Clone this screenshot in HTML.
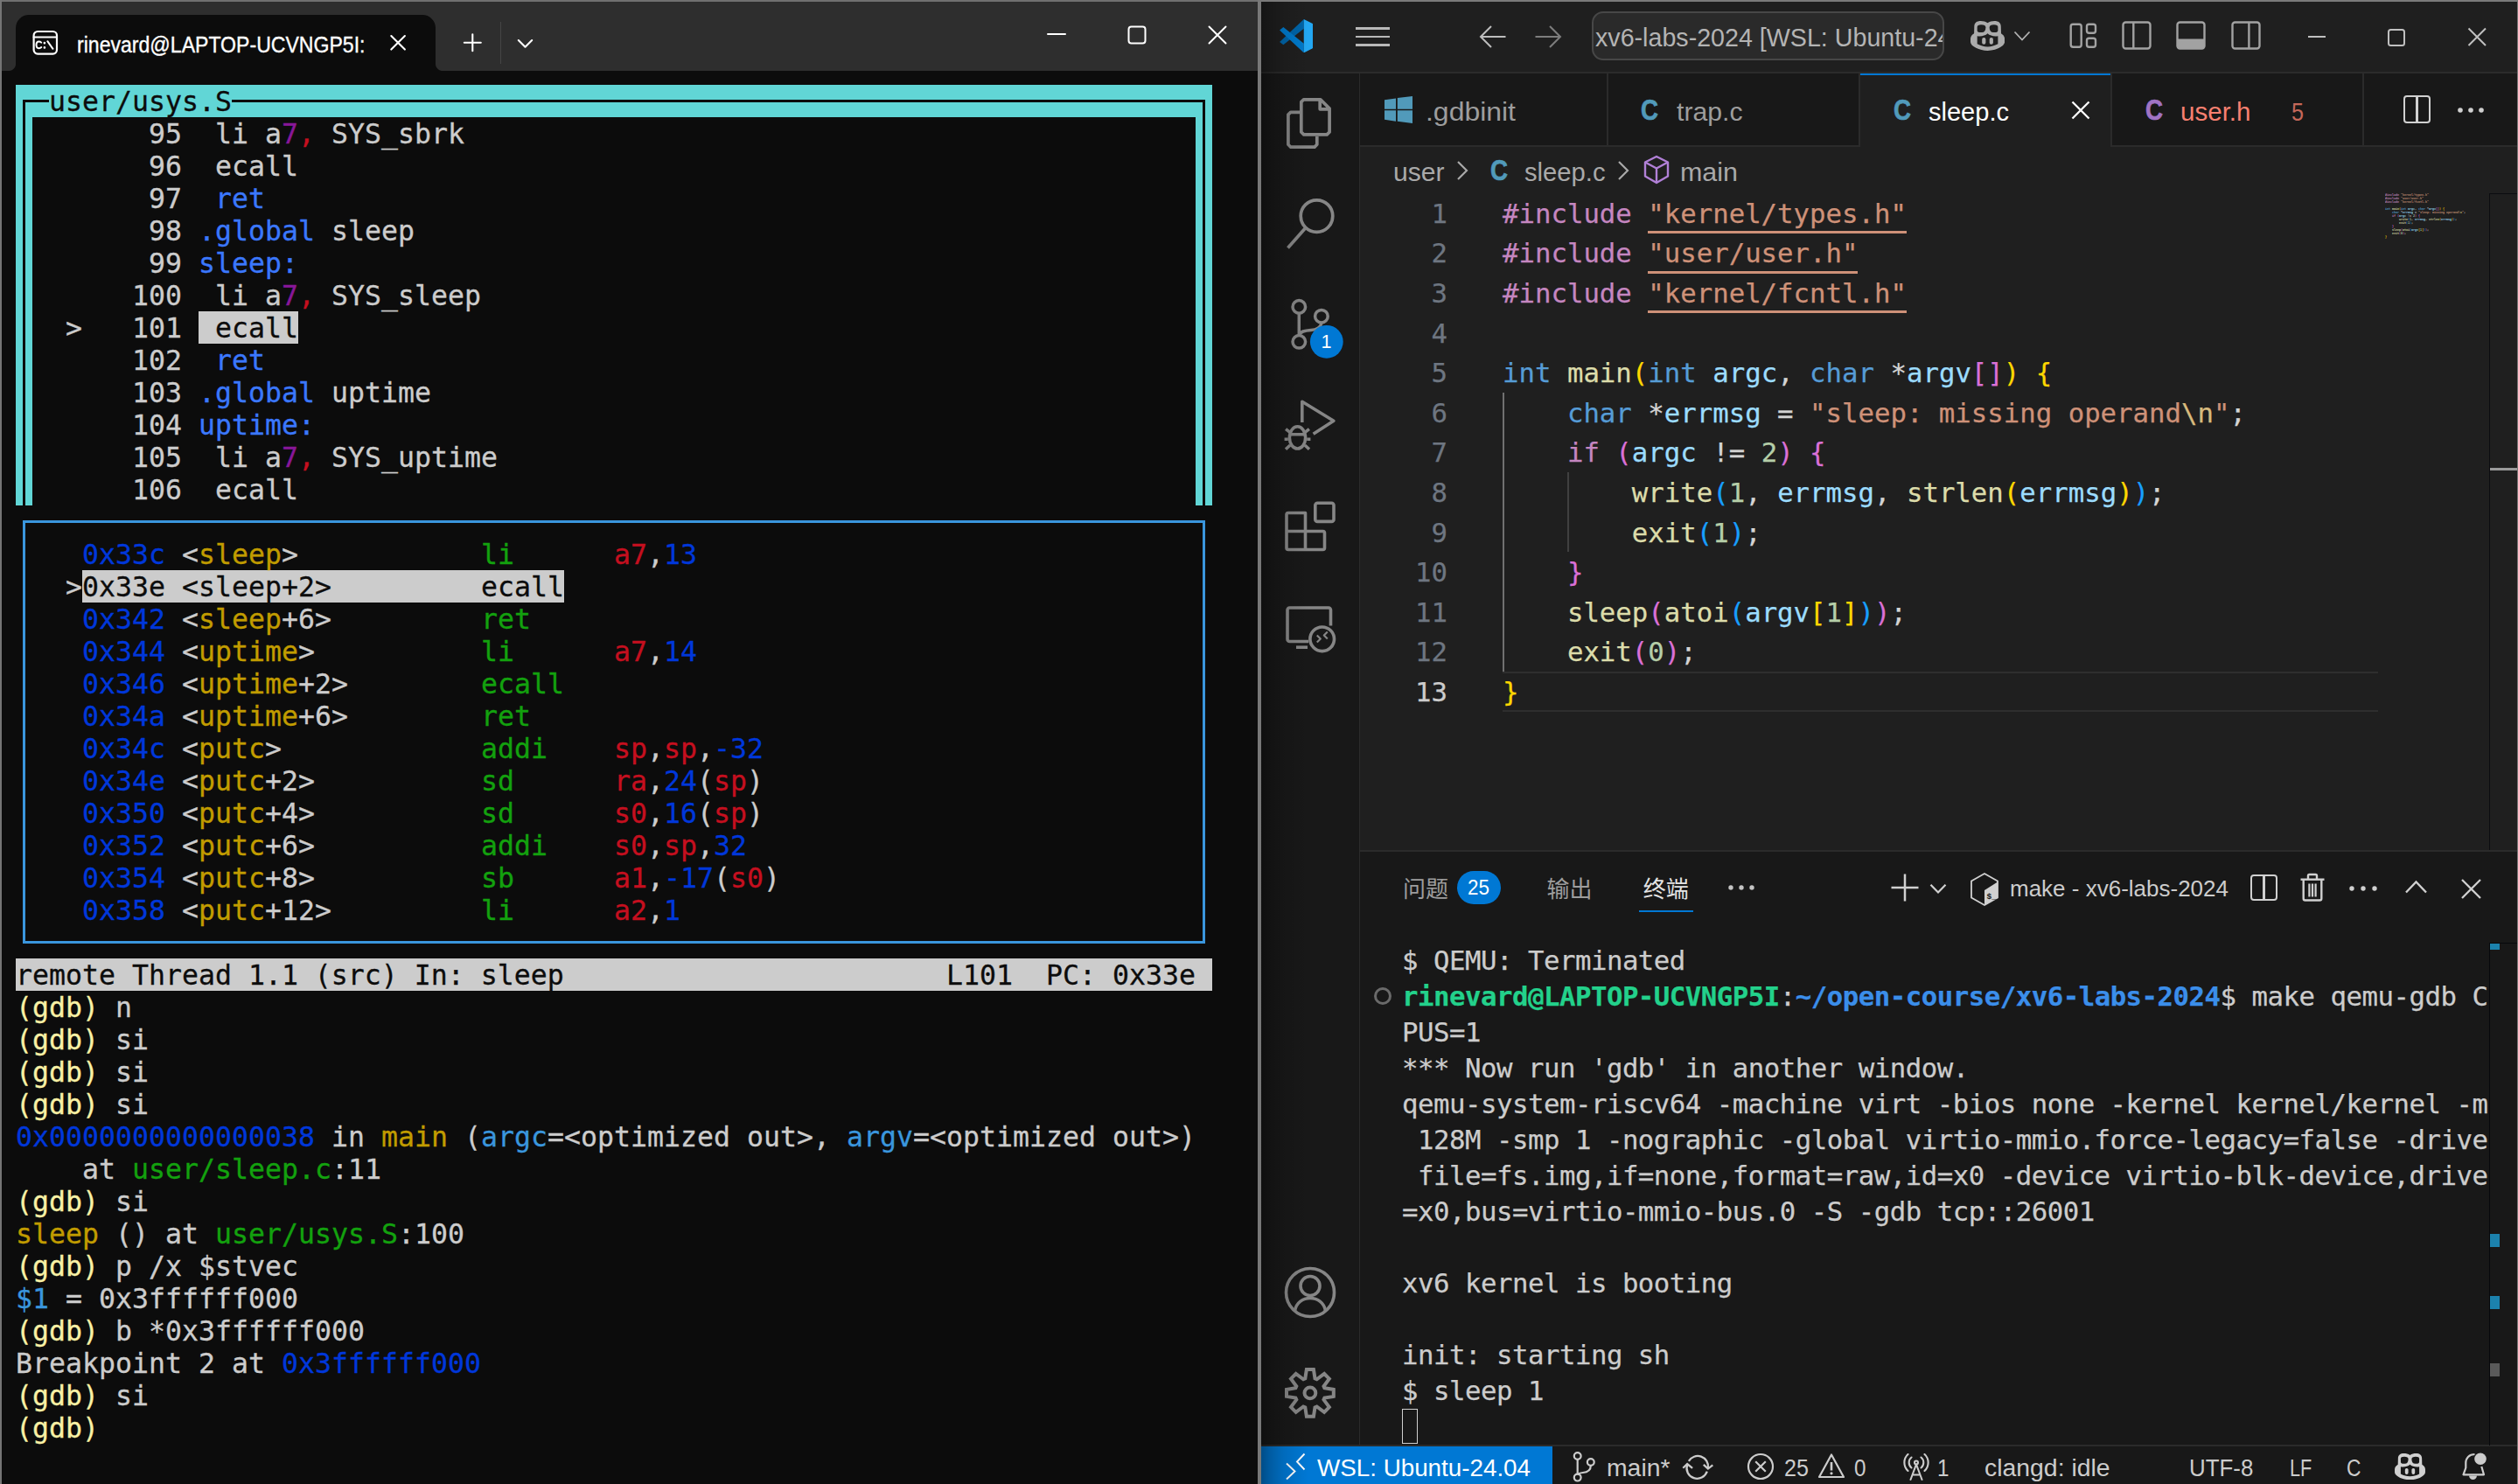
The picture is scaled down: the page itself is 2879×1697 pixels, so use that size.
<!DOCTYPE html><html><head><meta charset="utf-8"><title>xv6 gdb</title><style>
*{margin:0;padding:0;box-sizing:border-box}
html,body{width:2879px;height:1697px;overflow:hidden;background:#0c0c0c}
body{position:relative;font-family:"Liberation Sans",sans-serif}
.bx{position:absolute}
#wt{position:absolute;left:0;top:0;width:1441px;height:1697px;background:#0c0c0c;overflow:hidden}
#wt .t{position:absolute;white-space:pre;font-family:"DejaVu Sans Mono","Liberation Mono",monospace;font-size:31.56px;line-height:37px;height:37px;margin-top:1px;-webkit-text-stroke:0.3px currentColor}

.u{position:absolute;white-space:pre;font-family:"Liberation Sans","Noto Sans CJK SC",sans-serif;transform-origin:0 50%}
.m{position:absolute;white-space:pre;font-family:"DejaVu Sans Mono","Liberation Mono",monospace}
.ed{font-size:30.7px;line-height:46px;height:46px;margin-top:1px;-webkit-text-stroke:0.25px currentColor}
.tm{font-size:30.7px;letter-spacing:-0.484px;line-height:41px;height:41px;margin-top:0.5px;-webkit-text-stroke:0.25px currentColor}
.m i{font-style:normal}
</style></head><body>
<div id="wt">
<div class="bx" style="left:0;top:0;width:1441px;height:81px;background:#2e2e2e"></div>
<div class="bx" style="left:18px;top:17px;width:480px;height:64px;background:#0c0c0c;border-radius:15px 15px 0 0"></div>
<div class="bx" style="left:10px;top:73px;width:8px;height:8px;background:radial-gradient(circle at 0 0,#2e2e2e 7.500px,#0c0c0c 8.500px)"></div>
<div class="bx" style="left:498px;top:73px;width:8px;height:8px;background:radial-gradient(circle at 100% 0,#2e2e2e 7.500px,#0c0c0c 8.500px)"></div>
<svg class="bx" style="left:36px;top:33px" width="32" height="32" viewBox="0 0 32 32" fill="none" stroke="#fff" stroke-width="2.2" stroke-linecap="round" stroke-linejoin="round">
<rect x="2.6" y="3" width="26.4" height="25.6" rx="4.5"/><path d="M2.6 9.6H29" stroke-width="2"/>
<path d="M11.2 15.6c-.9-.9-1.7-1.2-2.7-1.2-2 0-3 1.6-3 3.9s1 3.9 3 3.9c1 0 1.8-.3 2.7-1.2" stroke-width="2"/>
<path d="M14.9 16.1v.1M14.9 21.3v.1" stroke-width="2.6"/><path d="M18.3 14.2l6.2 8.6" stroke-width="2"/>
</svg>
<div class="bx" id="wt-title" style="left:88px;top:32px;width:329px;height:38px;overflow:hidden"><span style="display:inline-block;line-height:38px;font-size:25.5px;color:#fff;white-space:nowrap;-webkit-text-stroke:0.35px #fff;transform:scaleX(0.905);transform-origin:0 50%">rinevard@LAPTOP-UCVNGP5I: ~/open-course/xv6-labs-2024</span></div>
<svg class="bx" style="left:443px;top:37px" width="24" height="24" viewBox="0 0 24 24" stroke="#fff" stroke-width="2.1" stroke-linecap="round"><path d="M4.300 4l15.600 15.600M19.900 4L4.300 19.600"/></svg>
<svg class="bx" style="left:528px;top:37px" width="24" height="24" viewBox="0 0 24 24" stroke="#fff" stroke-width="2.1" stroke-linecap="round"><path d="M12.300 2.200v19M2.800 11.700h19"/></svg>
<div class="bx" style="left:572px;top:25px;width:1px;height:48px;background:#454545"></div>
<svg class="bx" style="left:588px;top:37px" width="24" height="24" viewBox="0 0 24 24" fill="none" stroke="#fff" stroke-width="2.1" stroke-linecap="round" stroke-linejoin="round"><path d="M4.800 9l7.700 7.700L20.200 9"/></svg>
<svg class="bx" style="left:1196px;top:27px" width="24" height="24" viewBox="0 0 24 24" stroke="#fff" stroke-width="2" stroke-linecap="round"><path d="M2 12h20"/></svg>
<svg class="bx" style="left:1288px;top:28px" width="24" height="24" viewBox="0 0 24 24" fill="none" stroke="#fff" stroke-width="2"><rect x="2.500" y="2.500" width="19" height="19" rx="3"/></svg>
<svg class="bx" style="left:1380px;top:28px" width="24" height="24" viewBox="0 0 24 24" stroke="#fff" stroke-width="2" stroke-linecap="round"><path d="M2.500 2.500l19 19M21.500 2.500l-19 19"/></svg>
<div class="bx" style="left:0;top:0;width:1441px;height:2px;background:#707070"></div>
<div class="bx" style="left:0;top:0;width:2px;height:1697px;background:#757575"></div>
<div class="bx" style="left:1438px;top:0;width:3px;height:1697px;background:#787878"></div>

<div class="bx" style="left:18px;top:97px;width:1368px;height:37px;background:#61d6d6"></div>
<div class="bx" style="left:18px;top:134px;width:19px;height:444px;background:#61d6d6"></div>
<div class="bx" style="left:1367px;top:134px;width:19px;height:444px;background:#61d6d6"></div>
<div class="bx" style="left:26px;top:114px;width:30px;height:3px;background:#0c0c0c"></div>
<div class="bx" style="left:265px;top:114px;width:1113px;height:3px;background:#0c0c0c"></div>
<div class="bx" style="left:26px;top:114px;width:3px;height:464px;background:#0c0c0c"></div>
<div class="bx" style="left:1375px;top:114px;width:3px;height:464px;background:#0c0c0c"></div>
<div class="bx" style="left:26px;top:595px;width:1352px;height:484px;border:3px solid #3a96dd;box-sizing:border-box"></div>
<div class="bx" style="left:227px;top:356px;width:114px;height:37px;background:#cccccc"></div>
<div class="bx" style="left:94px;top:652px;width:551px;height:37px;background:#cccccc"></div>
<div class="bx" style="left:18px;top:1096px;width:1368px;height:37px;background:#cccccc"></div>
<span class="t" style="left:56px;top:97px;color:#0c0c0c">user/usys.S</span>
<span class="t" style="left:170px;top:134px;color:#cccccc">95</span>
<span class="t" style="left:227px;top:134px;color:#cccccc"> li a</span>
<span class="t" style="left:322px;top:134px;color:#881798">7</span>
<span class="t" style="left:341px;top:134px;color:#c50f1f">,</span>
<span class="t" style="left:360px;top:134px;color:#cccccc"> SYS_sbrk</span>
<span class="t" style="left:170px;top:171px;color:#cccccc">96</span>
<span class="t" style="left:227px;top:171px;color:#cccccc"> ecall</span>
<span class="t" style="left:170px;top:208px;color:#cccccc">97</span>
<span class="t" style="left:227px;top:208px;color:#cccccc"> </span>
<span class="t" style="left:246px;top:208px;color:#3b78ff">ret</span>
<span class="t" style="left:170px;top:245px;color:#cccccc">98</span>
<span class="t" style="left:227px;top:245px;color:#3b78ff">.global</span>
<span class="t" style="left:360px;top:245px;color:#cccccc"> sleep</span>
<span class="t" style="left:170px;top:282px;color:#cccccc">99</span>
<span class="t" style="left:227px;top:282px;color:#3b78ff">sleep:</span>
<span class="t" style="left:151px;top:319px;color:#cccccc">100</span>
<span class="t" style="left:227px;top:319px;color:#cccccc"> li a</span>
<span class="t" style="left:322px;top:319px;color:#881798">7</span>
<span class="t" style="left:341px;top:319px;color:#c50f1f">,</span>
<span class="t" style="left:360px;top:319px;color:#cccccc"> SYS_sleep</span>
<span class="t" style="left:151px;top:356px;color:#cccccc">101</span>
<span class="t" style="left:227px;top:356px;color:#0c0c0c"> ecall</span>
<span class="t" style="left:75px;top:356px;color:#cccccc">&gt;</span>
<span class="t" style="left:151px;top:393px;color:#cccccc">102</span>
<span class="t" style="left:227px;top:393px;color:#cccccc"> </span>
<span class="t" style="left:246px;top:393px;color:#3b78ff">ret</span>
<span class="t" style="left:151px;top:430px;color:#cccccc">103</span>
<span class="t" style="left:227px;top:430px;color:#3b78ff">.global</span>
<span class="t" style="left:360px;top:430px;color:#cccccc"> uptime</span>
<span class="t" style="left:151px;top:467px;color:#cccccc">104</span>
<span class="t" style="left:227px;top:467px;color:#3b78ff">uptime:</span>
<span class="t" style="left:151px;top:504px;color:#cccccc">105</span>
<span class="t" style="left:227px;top:504px;color:#cccccc"> li a</span>
<span class="t" style="left:322px;top:504px;color:#881798">7</span>
<span class="t" style="left:341px;top:504px;color:#c50f1f">,</span>
<span class="t" style="left:360px;top:504px;color:#cccccc"> SYS_uptime</span>
<span class="t" style="left:151px;top:541px;color:#cccccc">106</span>
<span class="t" style="left:227px;top:541px;color:#cccccc"> ecall</span>
<span class="t" style="left:94px;top:615px;color:#0037da">0x33c</span>
<span class="t" style="left:189px;top:615px;color:#cccccc"> &lt;</span>
<span class="t" style="left:227px;top:615px;color:#c19c00">sleep</span>
<span class="t" style="left:322px;top:615px;color:#cccccc">&gt;</span>
<span class="t" style="left:550px;top:615px;color:#13a10e">li</span>
<span class="t" style="left:702px;top:615px;color:#c50f1f">a7</span>
<span class="t" style="left:740px;top:615px;color:#cccccc">,</span>
<span class="t" style="left:759px;top:615px;color:#0037da">13</span>
<span class="t" style="left:75px;top:652px;color:#cccccc">&gt;</span>
<span class="t" style="left:94px;top:652px;color:#0c0c0c">0x33e &lt;sleep+2&gt;</span>
<span class="t" style="left:550px;top:652px;color:#0c0c0c">ecall</span>
<span class="t" style="left:94px;top:689px;color:#0037da">0x342</span>
<span class="t" style="left:189px;top:689px;color:#cccccc"> &lt;</span>
<span class="t" style="left:227px;top:689px;color:#c19c00">sleep</span>
<span class="t" style="left:322px;top:689px;color:#cccccc">+6&gt;</span>
<span class="t" style="left:550px;top:689px;color:#13a10e">ret</span>
<span class="t" style="left:94px;top:726px;color:#0037da">0x344</span>
<span class="t" style="left:189px;top:726px;color:#cccccc"> &lt;</span>
<span class="t" style="left:227px;top:726px;color:#c19c00">uptime</span>
<span class="t" style="left:341px;top:726px;color:#cccccc">&gt;</span>
<span class="t" style="left:550px;top:726px;color:#13a10e">li</span>
<span class="t" style="left:702px;top:726px;color:#c50f1f">a7</span>
<span class="t" style="left:740px;top:726px;color:#cccccc">,</span>
<span class="t" style="left:759px;top:726px;color:#0037da">14</span>
<span class="t" style="left:94px;top:763px;color:#0037da">0x346</span>
<span class="t" style="left:189px;top:763px;color:#cccccc"> &lt;</span>
<span class="t" style="left:227px;top:763px;color:#c19c00">uptime</span>
<span class="t" style="left:341px;top:763px;color:#cccccc">+2&gt;</span>
<span class="t" style="left:550px;top:763px;color:#13a10e">ecall</span>
<span class="t" style="left:94px;top:800px;color:#0037da">0x34a</span>
<span class="t" style="left:189px;top:800px;color:#cccccc"> &lt;</span>
<span class="t" style="left:227px;top:800px;color:#c19c00">uptime</span>
<span class="t" style="left:341px;top:800px;color:#cccccc">+6&gt;</span>
<span class="t" style="left:550px;top:800px;color:#13a10e">ret</span>
<span class="t" style="left:94px;top:837px;color:#0037da">0x34c</span>
<span class="t" style="left:189px;top:837px;color:#cccccc"> &lt;</span>
<span class="t" style="left:227px;top:837px;color:#c19c00">putc</span>
<span class="t" style="left:303px;top:837px;color:#cccccc">&gt;</span>
<span class="t" style="left:550px;top:837px;color:#13a10e">addi</span>
<span class="t" style="left:702px;top:837px;color:#c50f1f">sp</span>
<span class="t" style="left:740px;top:837px;color:#cccccc">,</span>
<span class="t" style="left:759px;top:837px;color:#c50f1f">sp</span>
<span class="t" style="left:797px;top:837px;color:#cccccc">,</span>
<span class="t" style="left:816px;top:837px;color:#0037da">-32</span>
<span class="t" style="left:94px;top:874px;color:#0037da">0x34e</span>
<span class="t" style="left:189px;top:874px;color:#cccccc"> &lt;</span>
<span class="t" style="left:227px;top:874px;color:#c19c00">putc</span>
<span class="t" style="left:303px;top:874px;color:#cccccc">+2&gt;</span>
<span class="t" style="left:550px;top:874px;color:#13a10e">sd</span>
<span class="t" style="left:702px;top:874px;color:#c50f1f">ra</span>
<span class="t" style="left:740px;top:874px;color:#cccccc">,</span>
<span class="t" style="left:759px;top:874px;color:#0037da">24</span>
<span class="t" style="left:797px;top:874px;color:#cccccc">(</span>
<span class="t" style="left:816px;top:874px;color:#c50f1f">sp</span>
<span class="t" style="left:854px;top:874px;color:#cccccc">)</span>
<span class="t" style="left:94px;top:911px;color:#0037da">0x350</span>
<span class="t" style="left:189px;top:911px;color:#cccccc"> &lt;</span>
<span class="t" style="left:227px;top:911px;color:#c19c00">putc</span>
<span class="t" style="left:303px;top:911px;color:#cccccc">+4&gt;</span>
<span class="t" style="left:550px;top:911px;color:#13a10e">sd</span>
<span class="t" style="left:702px;top:911px;color:#c50f1f">s0</span>
<span class="t" style="left:740px;top:911px;color:#cccccc">,</span>
<span class="t" style="left:759px;top:911px;color:#0037da">16</span>
<span class="t" style="left:797px;top:911px;color:#cccccc">(</span>
<span class="t" style="left:816px;top:911px;color:#c50f1f">sp</span>
<span class="t" style="left:854px;top:911px;color:#cccccc">)</span>
<span class="t" style="left:94px;top:948px;color:#0037da">0x352</span>
<span class="t" style="left:189px;top:948px;color:#cccccc"> &lt;</span>
<span class="t" style="left:227px;top:948px;color:#c19c00">putc</span>
<span class="t" style="left:303px;top:948px;color:#cccccc">+6&gt;</span>
<span class="t" style="left:550px;top:948px;color:#13a10e">addi</span>
<span class="t" style="left:702px;top:948px;color:#c50f1f">s0</span>
<span class="t" style="left:740px;top:948px;color:#cccccc">,</span>
<span class="t" style="left:759px;top:948px;color:#c50f1f">sp</span>
<span class="t" style="left:797px;top:948px;color:#cccccc">,</span>
<span class="t" style="left:816px;top:948px;color:#0037da">32</span>
<span class="t" style="left:94px;top:985px;color:#0037da">0x354</span>
<span class="t" style="left:189px;top:985px;color:#cccccc"> &lt;</span>
<span class="t" style="left:227px;top:985px;color:#c19c00">putc</span>
<span class="t" style="left:303px;top:985px;color:#cccccc">+8&gt;</span>
<span class="t" style="left:550px;top:985px;color:#13a10e">sb</span>
<span class="t" style="left:702px;top:985px;color:#c50f1f">a1</span>
<span class="t" style="left:740px;top:985px;color:#cccccc">,</span>
<span class="t" style="left:759px;top:985px;color:#0037da">-17</span>
<span class="t" style="left:816px;top:985px;color:#cccccc">(</span>
<span class="t" style="left:835px;top:985px;color:#c50f1f">s0</span>
<span class="t" style="left:873px;top:985px;color:#cccccc">)</span>
<span class="t" style="left:94px;top:1022px;color:#0037da">0x358</span>
<span class="t" style="left:189px;top:1022px;color:#cccccc"> &lt;</span>
<span class="t" style="left:227px;top:1022px;color:#c19c00">putc</span>
<span class="t" style="left:303px;top:1022px;color:#cccccc">+12&gt;</span>
<span class="t" style="left:550px;top:1022px;color:#13a10e">li</span>
<span class="t" style="left:702px;top:1022px;color:#c50f1f">a2</span>
<span class="t" style="left:740px;top:1022px;color:#cccccc">,</span>
<span class="t" style="left:759px;top:1022px;color:#0037da">1</span>
<span class="t" style="left:18px;top:1096px;color:#0c0c0c">remote Thread 1.1 (src) In: sleep</span>
<span class="t" style="left:1082px;top:1096px;color:#0c0c0c">L101  PC: 0x33e</span>
<span class="t" style="left:18px;top:1133px;color:#f9f1a5">(gdb)</span>
<span class="t" style="left:113px;top:1133px;color:#cccccc"> n</span>
<span class="t" style="left:18px;top:1170px;color:#f9f1a5">(gdb)</span>
<span class="t" style="left:113px;top:1170px;color:#cccccc"> si</span>
<span class="t" style="left:18px;top:1207px;color:#f9f1a5">(gdb)</span>
<span class="t" style="left:113px;top:1207px;color:#cccccc"> si</span>
<span class="t" style="left:18px;top:1244px;color:#f9f1a5">(gdb)</span>
<span class="t" style="left:113px;top:1244px;color:#cccccc"> si</span>
<span class="t" style="left:18px;top:1281px;color:#0037da">0x0000000000000038</span>
<span class="t" style="left:360px;top:1281px;color:#cccccc"> in </span>
<span class="t" style="left:436px;top:1281px;color:#c19c00">main</span>
<span class="t" style="left:512px;top:1281px;color:#cccccc"> (</span>
<span class="t" style="left:550px;top:1281px;color:#3a96dd">argc</span>
<span class="t" style="left:626px;top:1281px;color:#cccccc">=&lt;optimized out&gt;, </span>
<span class="t" style="left:968px;top:1281px;color:#3a96dd">argv</span>
<span class="t" style="left:1044px;top:1281px;color:#cccccc">=&lt;optimized out&gt;)</span>
<span class="t" style="left:18px;top:1318px;color:#cccccc">    at </span>
<span class="t" style="left:151px;top:1318px;color:#13a10e">user/sleep.c</span>
<span class="t" style="left:379px;top:1318px;color:#cccccc">:11</span>
<span class="t" style="left:18px;top:1355px;color:#f9f1a5">(gdb)</span>
<span class="t" style="left:113px;top:1355px;color:#cccccc"> si</span>
<span class="t" style="left:18px;top:1392px;color:#c19c00">sleep</span>
<span class="t" style="left:113px;top:1392px;color:#cccccc"> () at </span>
<span class="t" style="left:246px;top:1392px;color:#13a10e">user/usys.S</span>
<span class="t" style="left:455px;top:1392px;color:#cccccc">:100</span>
<span class="t" style="left:18px;top:1429px;color:#f9f1a5">(gdb)</span>
<span class="t" style="left:113px;top:1429px;color:#cccccc"> p /x $stvec</span>
<span class="t" style="left:18px;top:1466px;color:#3a96dd">$1</span>
<span class="t" style="left:56px;top:1466px;color:#cccccc"> = 0x3ffffff000</span>
<span class="t" style="left:18px;top:1503px;color:#f9f1a5">(gdb)</span>
<span class="t" style="left:113px;top:1503px;color:#cccccc"> b *0x3ffffff000</span>
<span class="t" style="left:18px;top:1540px;color:#cccccc">Breakpoint 2 at </span>
<span class="t" style="left:322px;top:1540px;color:#0037da">0x3ffffff000</span>
<span class="t" style="left:18px;top:1577px;color:#f9f1a5">(gdb)</span>
<span class="t" style="left:113px;top:1577px;color:#cccccc"> si</span>
<span class="t" style="left:18px;top:1614px;color:#f9f1a5">(gdb)</span>
<span class="t" style="left:113px;top:1614px;color:#cccccc"> </span>
</div>
<div class="bx" style="left:1442px;top:0px;width:1437px;height:1697px;background:#1f1f1f;"></div>
<div class="bx" style="left:1442px;top:84px;width:112px;height:1569px;background:#181818;"></div>
<div class="bx" style="left:1554px;top:84px;width:1px;height:1569px;background:#2b2b2b;"></div>
<div class="bx" style="left:1442px;top:82px;width:1437px;height:2px;background:#2b2b2b;"></div>
<div class="bx" style="left:1555px;top:84px;width:1324px;height:84px;background:#181818;"></div>
<div class="bx" style="left:1555px;top:166px;width:1324px;height:2px;background:#2b2b2b;"></div>
<div class="bx" style="left:2127px;top:84px;width:286px;height:84px;background:#1f1f1f;"></div>
<div class="bx" style="left:2127px;top:84px;width:286px;height:2px;background:#0078d4;"></div>
<div class="bx" style="left:1837px;top:84px;width:2px;height:82px;background:#2b2b2b;"></div>
<div class="bx" style="left:2125px;top:84px;width:2px;height:82px;background:#2b2b2b;"></div>
<div class="bx" style="left:2413px;top:84px;width:2px;height:82px;background:#2b2b2b;"></div>
<div class="bx" style="left:2701px;top:84px;width:2px;height:82px;background:#2b2b2b;"></div>
<div class="bx" style="left:1555px;top:973px;width:1324px;height:680px;background:#181818;"></div>
<div class="bx" style="left:1555px;top:972px;width:1324px;height:2px;background:#2b2b2b;"></div>
<div class="bx" style="left:1442px;top:1652px;width:1437px;height:45px;background:#181818;"></div>
<div class="bx" style="left:1442px;top:1652px;width:1437px;height:2px;background:#2b2b2b;"></div>
<div class="bx" style="left:1442px;top:1654px;width:333px;height:43px;background:#0078d4;"></div>
<div class="bx" style="left:1441px;top:0px;width:1438px;height:2px;background:#7a7a7a;"></div>
<div class="bx" style="left:1441px;top:0px;width:1px;height:1697px;background:#787878;"></div>
<div class="bx" style="left:2878px;top:0px;width:1px;height:1697px;background:#787878;"></div>
<svg class="bx" style="left:1462.5px;top:21.8px" width="38.6" height="38.4" viewBox="0 0 100 100" ><path d="M0 67.500L4 63.500 72 0V28L11 76.500z" fill="#0065a9"/><path d="M0 32.500L11 23.500 72 72v28L4 36.500z" fill="#007acc"/><path d="M72 0l25 12.500c2 1 3 2.500 3 4.500v66c0 2-1 3.500-3 4.500L72 100z" fill="#23a7f2"/></svg>
<div class="bx" style="left:1550px;top:31.4px;width:39px;height:2.2px;background:#b8b8b8;"></div>
<div class="bx" style="left:1550px;top:40.9px;width:39px;height:2.2px;background:#b8b8b8;"></div>
<div class="bx" style="left:1550px;top:50.4px;width:39px;height:2.2px;background:#b8b8b8;"></div>
<svg class="bx" style="left:1690px;top:27px" width="34" height="30" viewBox="0 0 34 30" ><path d="M15 3L3 15l12 12M3.500 15H31.500" fill="none" stroke="#bdbdbd" stroke-width="2"/></svg>
<svg class="bx" style="left:1753px;top:27px" width="34" height="30" viewBox="0 0 34 30" ><path d="M19 3l12 12-12 12M30.500 15H2.500" fill="none" stroke="#7d7d7d" stroke-width="2"/></svg>
<div class="bx" style="left:1820px;top:13px;width:403px;height:56px;background:#2a2a2a;border:2px solid #474747;border-radius:13px;overflow:hidden"></div>
<div class="bx" style="left:1822px;top:14px;width:399px;height:54px;overflow:hidden">
<span class="u" style="left:2px;top:9px;font-size:28.8px;line-height:40px;color:#b4b4b4;transform:scaleX(0.9945)">xv6-labs-2024 [WSL: Ubuntu-24.04]</span></div>
<svg class="bx" style="left:2253.3px;top:24px" width="39.1" height="33.9" viewBox="0 0 39.1 33.9" ><path d="M4.30,6.50 C4.30,2.00 7.20,0.00 11.70,0.00 C14.70,0.00 17.30,0.70 19.55,2.20 C21.80,0.70 24.40,0.00 27.40,0.00 C31.90,0.00 34.80,2.00 34.80,6.50 L35.00,14.30 C37.70,16.00 39.10,18.00 39.10,20.50 L39.10,24.00 C39.10,29.00 28.70,33.90 19.55,33.90 C10.40,33.90 0.00,29.00 0.00,24.00 L0.00,20.50 C0.00,18.00 1.40,16.00 4.10,14.30 Z" fill="#ababab"/><path d="M7.70,7.00 C7.70,5.00 9.20,4.20 12.20,4.20 C15.70,4.20 17.40,5.20 17.40,7.50 C17.40,11.00 15.90,13.10 12.90,13.10 L10.10,13.10 C8.40,13.10 7.70,12.00 7.70,10.30 Z" fill="#1f1f1f"/><path d="M31.40,7.00 C31.40,5.00 29.90,4.20 26.90,4.20 C23.40,4.20 21.70,5.20 21.70,7.50 C21.70,11.00 23.20,13.10 26.20,13.10 L29.00,13.10 C30.70,13.10 31.40,12.00 31.40,10.30 Z" fill="#1f1f1f"/><path d="M7.70,17.20 C12.20,17.80 16.90,17.00 19.55,14.30 C22.20,17.00 26.90,17.80 31.40,17.20 L31.40,26.30 C27.70,28.40 23.70,29.40 19.55,29.40 C15.40,29.40 11.40,28.40 7.70,26.30 Z" fill="#1f1f1f"/><rect x="13.20" y="19.00" width="4.2" height="7.8" rx="2.1" fill="#ababab"/><rect x="21.70" y="19.00" width="4.2" height="7.8" rx="2.1" fill="#ababab"/></svg>
<svg class="bx" style="left:2302px;top:35px" width="20" height="13" viewBox="0 0 20 13" ><path d="M1.500 1.500l8.500 9 8.500-9" fill="none" stroke="#b4b4b4" stroke-width="1.800"/></svg>
<svg class="bx" style="left:2365px;top:25px" width="34" height="32" viewBox="0 0 34 32" ><g fill="none" stroke="#a2a2a2" stroke-width="2.400"><rect x="2.700" y="2.700" width="12" height="26" rx="2.500"/><rect x="21" y="2.700" width="10" height="10" rx="2.500"/><rect x="21" y="18.700" width="10" height="10" rx="2.500"/></g></svg>
<svg class="bx" style="left:2425px;top:22.7px" width="36" height="35" viewBox="0 0 36 35" ><g fill="none" stroke="#a2a2a2" stroke-width="2.400"><rect x="2.500" y="2.500" width="31" height="30" rx="3"/><path d="M14.300 2.500v30"/></g></svg>
<svg class="bx" style="left:2487px;top:22.7px" width="36" height="35" viewBox="0 0 36 35" ><g fill="none" stroke="#a2a2a2" stroke-width="2.400"><rect x="2.500" y="2.500" width="31" height="30" rx="3"/></g><path d="M2.500 21.500h31v8a3 3 0 0 1-3 3h-25a3 3 0 0 1-3-3z" fill="#a2a2a2"/></svg>
<svg class="bx" style="left:2549.5px;top:22.7px" width="36" height="35" viewBox="0 0 36 35" ><g fill="none" stroke="#a2a2a2" stroke-width="2.400"><rect x="2.500" y="2.500" width="31" height="30" rx="3"/><path d="M21.400 2.500v30"/></g></svg>
<div class="bx" style="left:2639px;top:41.3px;width:20px;height:2px;background:#c0c0c0;"></div>
<div class="bx" style="left:2730px;top:32.500px;width:20px;height:20px;border:2px solid #c0c0c0;border-radius:3.500px"></div>
<svg class="bx" style="left:2820px;top:30px" width="24" height="24" viewBox="0 0 24 24" ><path d="M2.500 2.500l19.500 19.500M22 2.500L2.500 22" stroke="#c0c0c0" stroke-width="2" fill="none"/></svg>
<svg class="bx" style="left:1583px;top:110px" width="32" height="31" viewBox="0 0 32 31" ><g fill="#519aba"><path d="M0 4.300L13 2.400V14.700H0zM14.800 2.100L32 0V14.700H14.800zM0 16.300h13v12.400L0 26.800zM14.800 16.300H32V31l-17.200-2.300z"/></g></svg>
<span class="u" style="left:1629.5px;top:107.2px;font-size:29.89px;line-height:42px;color:#9d9d9d;transform:scaleX(1.0691);">.gdbinit</span>
<span class="u" style="left:1876px;top:102.7px;font-size:33px;line-height:46px;color:#519aba;font-weight:700;transform:scaleX(0.8388);-webkit-text-stroke:0.7px #519aba;">C</span>
<span class="u" style="left:1917px;top:107.2px;font-size:29.89px;line-height:42px;color:#9d9d9d;transform:scaleX(1.0105);">trap.c</span>
<span class="u" style="left:2165px;top:102.7px;font-size:33px;line-height:46px;color:#519aba;font-weight:700;transform:scaleX(0.8388);-webkit-text-stroke:0.7px #519aba;">C</span>
<span class="u" style="left:2204.5px;top:107.2px;font-size:29.89px;line-height:42px;color:#ffffff;transform:scaleX(0.9718);">sleep.c</span>
<svg class="bx" style="left:2367px;top:114px" width="24" height="24" viewBox="0 0 24 24" ><path d="M2.500 2.500l19 19M21.500 2.500l-19 19" stroke="#ffffff" stroke-width="2.300" fill="none"/></svg>
<span class="u" style="left:2452.5px;top:102.7px;font-size:33px;line-height:46px;color:#a074c4;font-weight:700;transform:scaleX(0.8388);-webkit-text-stroke:0.7px #a074c4;">C</span>
<span class="u" style="left:2493px;top:107.2px;font-size:29.89px;line-height:42px;color:#f88070;transform:scaleX(0.9891);">user.h</span>
<span class="u" style="left:2619.5px;top:107.2px;font-size:29.89px;line-height:42px;color:#c5685a;transform:scaleX(0.8421);">5</span>
<div class="bx" style="left:2748px;top:109px;width:31px;height:31.500px;border:2.600px solid #d0d0d0;border-radius:4px"></div>
<div class="bx" style="left:2762.2px;top:110px;width:2.6px;height:30px;background:#d0d0d0;"></div>
<svg class="bx" style="left:2808.8px;top:122.1px" width="8" height="8" viewBox="0 0 8 8" ><circle cx="4" cy="4" r="2.800" fill="#d0d0d0"/></svg>
<svg class="bx" style="left:2820.7px;top:122.1px" width="8" height="8" viewBox="0 0 8 8" ><circle cx="4" cy="4" r="2.800" fill="#d0d0d0"/></svg>
<svg class="bx" style="left:2832.6px;top:122.1px" width="8" height="8" viewBox="0 0 8 8" ><circle cx="4" cy="4" r="2.800" fill="#d0d0d0"/></svg>
<span class="u" style="left:1593px;top:176.2px;font-size:29.89px;line-height:42px;color:#a9a9a9;transform:scaleX(1.0065);">user</span>
<svg class="bx" style="left:1658px;top:181px" width="28" height="28" viewBox="0 0 28 28" ><path d="M9 4l10 10-10 10" fill="none" stroke="#a9a9a9" stroke-width="2.2"/></svg>
<span class="u" style="left:1703.5px;top:171.7px;font-size:33px;line-height:46px;color:#519aba;font-weight:700;transform:scaleX(0.8388);-webkit-text-stroke:0.7px #519aba;">C</span>
<span class="u" style="left:1743px;top:176.2px;font-size:29.89px;line-height:42px;color:#a9a9a9;transform:scaleX(0.9771);">sleep.c</span>
<svg class="bx" style="left:1842px;top:181px" width="28" height="28" viewBox="0 0 28 28" ><path d="M9 4l10 10-10 10" fill="none" stroke="#a9a9a9" stroke-width="2.2"/></svg>
<svg class="bx" style="left:1877px;top:176px" width="34" height="36" viewBox="0 0 34 36" ><g fill="none" stroke="#b180d7" stroke-width="2.4" stroke-linejoin="round"><path d="M17 3L30 9.500V25.500L17 33 4 25.500V9.500z"/><path d="M4 9.500l13 7 13-7M17 16.500V33"/></g></svg>
<span class="u" style="left:1921px;top:176.2px;font-size:29.89px;line-height:42px;color:#a9a9a9;transform:scaleX(1.0191);">main</span>
<div class="bx" style="left:1718px;top:768px;width:1001px;height:2px;background:#2e2e2e;"></div>
<div class="bx" style="left:1718px;top:812px;width:1001px;height:2px;background:#2e2e2e;"></div>
<div class="bx" style="left:1718px;top:449px;width:2px;height:319px;background:#707070;"></div>
<div class="bx" style="left:1792px;top:540px;width:2px;height:91px;background:#404040;"></div>
<span class="m ed" style="left:1636.5px;top:220.8px;color:#6e7681">1</span>
<span class="m ed" style="left:1718px;top:220.8px"><i style="color:#c586c0">#include</i><i style="color:#d4d4d4"> </i><i style="color:#ce9178">"kernel/types.h"</i></span>
<span class="m ed" style="left:1636.5px;top:266.4px;color:#6e7681">2</span>
<span class="m ed" style="left:1718px;top:266.4px"><i style="color:#c586c0">#include</i><i style="color:#d4d4d4"> </i><i style="color:#ce9178">"user/user.h"</i></span>
<span class="m ed" style="left:1636.5px;top:312.0px;color:#6e7681">3</span>
<span class="m ed" style="left:1718px;top:312.0px"><i style="color:#c586c0">#include</i><i style="color:#d4d4d4"> </i><i style="color:#ce9178">"kernel/fcntl.h"</i></span>
<span class="m ed" style="left:1636.5px;top:357.6px;color:#6e7681">4</span>
<span class="m ed" style="left:1636.5px;top:403.2px;color:#6e7681">5</span>
<span class="m ed" style="left:1718px;top:403.2px"><i style="color:#569cd6">int</i><i style="color:#d4d4d4"> </i><i style="color:#dcdcaa">main</i><i style="color:#ffd700">(</i><i style="color:#569cd6">int</i><i style="color:#d4d4d4"> </i><i style="color:#9cdcfe">argc</i><i style="color:#d4d4d4">, </i><i style="color:#569cd6">char</i><i style="color:#d4d4d4"> *</i><i style="color:#9cdcfe">argv</i><i style="color:#da70d6">[]</i><i style="color:#ffd700">)</i><i style="color:#d4d4d4"> </i><i style="color:#ffd700">{</i></span>
<span class="m ed" style="left:1636.5px;top:448.8px;color:#6e7681">6</span>
<span class="m ed" style="left:1718px;top:448.8px"><i style="color:#d4d4d4">    </i><i style="color:#569cd6">char</i><i style="color:#d4d4d4"> *</i><i style="color:#9cdcfe">errmsg</i><i style="color:#d4d4d4"> = </i><i style="color:#ce9178">"sleep: missing operand</i><i style="color:#d7ba7d">\n</i><i style="color:#ce9178">"</i><i style="color:#d4d4d4">;</i></span>
<span class="m ed" style="left:1636.5px;top:494.4px;color:#6e7681">7</span>
<span class="m ed" style="left:1718px;top:494.4px"><i style="color:#d4d4d4">    </i><i style="color:#c586c0">if</i><i style="color:#d4d4d4"> </i><i style="color:#da70d6">(</i><i style="color:#9cdcfe">argc</i><i style="color:#d4d4d4"> != </i><i style="color:#b5cea8">2</i><i style="color:#da70d6">)</i><i style="color:#d4d4d4"> </i><i style="color:#da70d6">{</i></span>
<span class="m ed" style="left:1636.5px;top:540.0px;color:#6e7681">8</span>
<span class="m ed" style="left:1718px;top:540.0px"><i style="color:#d4d4d4">        </i><i style="color:#dcdcaa">write</i><i style="color:#179fff">(</i><i style="color:#b5cea8">1</i><i style="color:#d4d4d4">, </i><i style="color:#9cdcfe">errmsg</i><i style="color:#d4d4d4">, </i><i style="color:#dcdcaa">strlen</i><i style="color:#ffd700">(</i><i style="color:#9cdcfe">errmsg</i><i style="color:#ffd700">)</i><i style="color:#179fff">)</i><i style="color:#d4d4d4">;</i></span>
<span class="m ed" style="left:1636.5px;top:585.6px;color:#6e7681">9</span>
<span class="m ed" style="left:1718px;top:585.6px"><i style="color:#d4d4d4">        </i><i style="color:#dcdcaa">exit</i><i style="color:#179fff">(</i><i style="color:#b5cea8">1</i><i style="color:#179fff">)</i><i style="color:#d4d4d4">;</i></span>
<span class="m ed" style="left:1618.1px;top:631.2px;color:#6e7681">10</span>
<span class="m ed" style="left:1718px;top:631.2px"><i style="color:#d4d4d4">    </i><i style="color:#da70d6">}</i></span>
<span class="m ed" style="left:1618.1px;top:676.8px;color:#6e7681">11</span>
<span class="m ed" style="left:1718px;top:676.8px"><i style="color:#d4d4d4">    </i><i style="color:#dcdcaa">sleep</i><i style="color:#da70d6">(</i><i style="color:#dcdcaa">atoi</i><i style="color:#179fff">(</i><i style="color:#9cdcfe">argv</i><i style="color:#ffd700">[</i><i style="color:#b5cea8">1</i><i style="color:#ffd700">]</i><i style="color:#179fff">)</i><i style="color:#da70d6">)</i><i style="color:#d4d4d4">;</i></span>
<span class="m ed" style="left:1618.1px;top:722.4px;color:#6e7681">12</span>
<span class="m ed" style="left:1718px;top:722.4px"><i style="color:#d4d4d4">    </i><i style="color:#dcdcaa">exit</i><i style="color:#da70d6">(</i><i style="color:#b5cea8">0</i><i style="color:#da70d6">)</i><i style="color:#d4d4d4">;</i></span>
<span class="m ed" style="left:1618.1px;top:768.0px;color:#cccccc">13</span>
<span class="m ed" style="left:1718px;top:768.0px"><i style="color:#ffd700">}</i></span>
<div class="bx" style="left:1884px;top:264px;width:296px;height:3.2px;background:#ce9178;"></div>
<div class="bx" style="left:1884px;top:310px;width:240px;height:3.2px;background:#ce9178;"></div>
<div class="bx" style="left:1884px;top:355px;width:296px;height:3.2px;background:#ce9178;"></div>
<div class="m" style="left:2727px;top:220.500px;font-size:30.7px;font-weight:700;transform:scale(0.10828);transform-origin:0 0;opacity:.85"><div style="height:36.94px;line-height:36.94px"><i style="color:#c586c0">#include</i><i style="color:#d4d4d4"> </i><i style="color:#ce9178">"kernel/types.h"</i></div><div style="height:36.94px;line-height:36.94px"><i style="color:#c586c0">#include</i><i style="color:#d4d4d4"> </i><i style="color:#ce9178">"user/user.h"</i></div><div style="height:36.94px;line-height:36.94px"><i style="color:#c586c0">#include</i><i style="color:#d4d4d4"> </i><i style="color:#ce9178">"kernel/fcntl.h"</i></div><div style="height:36.94px;line-height:36.94px"></div><div style="height:36.94px;line-height:36.94px"><i style="color:#569cd6">int</i><i style="color:#d4d4d4"> </i><i style="color:#dcdcaa">main</i><i style="color:#ffd700">(</i><i style="color:#569cd6">int</i><i style="color:#d4d4d4"> </i><i style="color:#9cdcfe">argc</i><i style="color:#d4d4d4">, </i><i style="color:#569cd6">char</i><i style="color:#d4d4d4"> *</i><i style="color:#9cdcfe">argv</i><i style="color:#da70d6">[]</i><i style="color:#ffd700">)</i><i style="color:#d4d4d4"> </i><i style="color:#ffd700">{</i></div><div style="height:36.94px;line-height:36.94px"><i style="color:#d4d4d4">    </i><i style="color:#569cd6">char</i><i style="color:#d4d4d4"> *</i><i style="color:#9cdcfe">errmsg</i><i style="color:#d4d4d4"> = </i><i style="color:#ce9178">"sleep: missing operand</i><i style="color:#d7ba7d">\n</i><i style="color:#ce9178">"</i><i style="color:#d4d4d4">;</i></div><div style="height:36.94px;line-height:36.94px"><i style="color:#d4d4d4">    </i><i style="color:#c586c0">if</i><i style="color:#d4d4d4"> </i><i style="color:#da70d6">(</i><i style="color:#9cdcfe">argc</i><i style="color:#d4d4d4"> != </i><i style="color:#b5cea8">2</i><i style="color:#da70d6">)</i><i style="color:#d4d4d4"> </i><i style="color:#da70d6">{</i></div><div style="height:36.94px;line-height:36.94px"><i style="color:#d4d4d4">        </i><i style="color:#dcdcaa">write</i><i style="color:#179fff">(</i><i style="color:#b5cea8">1</i><i style="color:#d4d4d4">, </i><i style="color:#9cdcfe">errmsg</i><i style="color:#d4d4d4">, </i><i style="color:#dcdcaa">strlen</i><i style="color:#ffd700">(</i><i style="color:#9cdcfe">errmsg</i><i style="color:#ffd700">)</i><i style="color:#179fff">)</i><i style="color:#d4d4d4">;</i></div><div style="height:36.94px;line-height:36.94px"><i style="color:#d4d4d4">        </i><i style="color:#dcdcaa">exit</i><i style="color:#179fff">(</i><i style="color:#b5cea8">1</i><i style="color:#179fff">)</i><i style="color:#d4d4d4">;</i></div><div style="height:36.94px;line-height:36.94px"><i style="color:#d4d4d4">    </i><i style="color:#da70d6">}</i></div><div style="height:36.94px;line-height:36.94px"><i style="color:#d4d4d4">    </i><i style="color:#dcdcaa">sleep</i><i style="color:#da70d6">(</i><i style="color:#dcdcaa">atoi</i><i style="color:#179fff">(</i><i style="color:#9cdcfe">argv</i><i style="color:#ffd700">[</i><i style="color:#b5cea8">1</i><i style="color:#ffd700">]</i><i style="color:#179fff">)</i><i style="color:#da70d6">)</i><i style="color:#d4d4d4">;</i></div><div style="height:36.94px;line-height:36.94px"><i style="color:#d4d4d4">    </i><i style="color:#dcdcaa">exit</i><i style="color:#da70d6">(</i><i style="color:#b5cea8">0</i><i style="color:#da70d6">)</i><i style="color:#d4d4d4">;</i></div><div style="height:36.94px;line-height:36.94px"><i style="color:#ffd700">}</i></div></div>
<div class="bx" style="left:2846px;top:221px;width:1px;height:751px;background:#0b0c10;"></div>
<div class="bx" style="left:2846px;top:221px;width:32px;height:1px;background:#0b0c10;"></div>
<div class="bx" style="left:2847px;top:535px;width:31px;height:3px;background:#9a9a9a;"></div>
<span class="u" style="left:1604px;top:996.5px;font-size:26px;line-height:40px;color:#9d9d9d;font-family:"Liberation Sans","Noto Sans CJK SC",sans-serif;letter-spacing:-0.35px">问题</span>
<div class="bx" style="left:1666px;top:996px;width:49.500px;height:38.400px;border-radius:19.200px;background:#0078d4"></div>
<span class="u" style="left:1678px;top:999.0px;font-size:23.47px;line-height:33px;color:#ffffff;transform:scaleX(0.9575);">25</span>
<span class="u" style="left:1768.5px;top:996.5px;font-size:26px;line-height:40px;color:#9d9d9d;font-family:"Liberation Sans","Noto Sans CJK SC",sans-serif;letter-spacing:-0.35px">输出</span>
<span class="u" style="left:1878.7px;top:996.5px;font-size:26px;line-height:40px;color:#e4e4e4;font-family:"Liberation Sans","Noto Sans CJK SC",sans-serif;letter-spacing:0.15px">终端</span>
<div class="bx" style="left:1874px;top:1041px;width:62px;height:2.2px;background:#0078d4;"></div>
<svg class="bx" style="left:1975.4px;top:1011px" width="8" height="8" viewBox="0 0 8 8" ><circle cx="4" cy="4" r="2.700" fill="#c4c4c4"/></svg>
<svg class="bx" style="left:1987.3px;top:1011px" width="8" height="8" viewBox="0 0 8 8" ><circle cx="4" cy="4" r="2.700" fill="#c4c4c4"/></svg>
<svg class="bx" style="left:1999.2px;top:1011px" width="8" height="8" viewBox="0 0 8 8" ><circle cx="4" cy="4" r="2.700" fill="#c4c4c4"/></svg>
<svg class="bx" style="left:2162px;top:999px" width="32" height="32" viewBox="0 0 32 32" ><path d="M16 0.500v31M0.500 16h31" stroke="#d0d0d0" stroke-width="2.500" fill="none"/></svg>
<svg class="bx" style="left:2206px;top:1010px" width="20" height="13" viewBox="0 0 20 13" ><path d="M1.500 1.800l8.500 8.700 8.500-8.700" fill="none" stroke="#d0d0d0" stroke-width="2.200"/></svg>
<svg class="bx" style="left:2250.5px;top:996.5px" width="36" height="40" viewBox="0 0 36 40" ><path d="M18 2L33 10.500V29.500L18 38 3 29.500V10.500z" fill="none" stroke="#d0d0d0" stroke-width="1.800" stroke-linejoin="round"/><path d="M33 11.500V29.500L18 38V21z" fill="#d0d0d0"/><text x="20.500" y="31" font-family="Liberation Mono,monospace" font-size="9.500" font-weight="700" fill="#181818">$_</text></svg>
<span class="u" style="left:2298.2px;top:999.2px;font-size:25.29px;line-height:35px;color:#cccccc;transform:scaleX(1.0284);">make - xv6-labs-2024</span>
<div class="bx" style="left:2573.300px;top:999.600px;width:30.700px;height:30.400px;border:2.500px solid #d0d0d0;border-radius:4px"></div>
<div class="bx" style="left:2587.4px;top:1000px;width:2.5px;height:30px;background:#d0d0d0;"></div>
<svg class="bx" style="left:2629px;top:998px" width="30" height="34" viewBox="0 0 30 34" ><g fill="none" stroke="#d0d0d0" stroke-width="2.400"><path d="M1.500 7.700h27"/><path d="M10 7V3.500a1.500 1.500 0 0 1 1.500-1.500h7A1.500 1.500 0 0 1 20 3.500V7"/><path d="M4.700 8v21.500a2 2 0 0 0 2 2h16.600a2 2 0 0 0 2-2V8"/><path d="M11.400 12.500v15M15 12.500v15M18.600 12.500v15" stroke-width="2.200"/></g></svg>
<svg class="bx" style="left:2685.4px;top:1012.4px" width="8" height="8" viewBox="0 0 8 8" ><circle cx="4" cy="4" r="2.700" fill="#d0d0d0"/></svg>
<svg class="bx" style="left:2698.1px;top:1012.4px" width="8" height="8" viewBox="0 0 8 8" ><circle cx="4" cy="4" r="2.700" fill="#d0d0d0"/></svg>
<svg class="bx" style="left:2710.6px;top:1012.4px" width="8" height="8" viewBox="0 0 8 8" ><circle cx="4" cy="4" r="2.700" fill="#d0d0d0"/></svg>
<svg class="bx" style="left:2749px;top:1005px" width="27" height="18" viewBox="0 0 27 18" ><path d="M2 15.500l11.500-12 11.500 12" fill="none" stroke="#d0d0d0" stroke-width="2.300"/></svg>
<svg class="bx" style="left:2812.5px;top:1003.5px" width="25" height="25" viewBox="0 0 25 25" ><path d="M2 2l21 21M23 2L2 23" stroke="#d0d0d0" stroke-width="2.300" fill="none"/></svg>
<span class="m tm" style="left:1603px;top:1077.8px"><i style="color:#cccccc">$ QEMU: Terminated</i></span>
<span class="m tm" style="left:1603px;top:1118.8px"><i style="color:#23d18b;font-weight:700">rinevard@LAPTOP-UCVNGP5I</i><i style="color:#cccccc">:</i><i style="color:#3b8eea;font-weight:700">~/open-course/xv6-labs-2024</i><i style="color:#cccccc">$ make qemu-gdb C</i></span>
<span class="m tm" style="left:1603px;top:1159.8px"><i style="color:#cccccc">PUS=1</i></span>
<span class="m tm" style="left:1603px;top:1200.8px"><i style="color:#cccccc">*** Now run 'gdb' in another window.</i></span>
<span class="m tm" style="left:1603px;top:1241.8px"><i style="color:#cccccc">qemu-system-riscv64 -machine virt -bios none -kernel kernel/kernel -m</i></span>
<span class="m tm" style="left:1603px;top:1282.8px"><i style="color:#cccccc"> 128M -smp 1 -nographic -global virtio-mmio.force-legacy=false -drive</i></span>
<span class="m tm" style="left:1603px;top:1323.8px"><i style="color:#cccccc"> file=fs.img,if=none,format=raw,id=x0 -device virtio-blk-device,drive</i></span>
<span class="m tm" style="left:1603px;top:1364.8px"><i style="color:#cccccc">=x0,bus=virtio-mmio-bus.0 -S -gdb tcp::26001</i></span>
<span class="m tm" style="left:1603px;top:1446.8px"><i style="color:#cccccc">xv6 kernel is booting</i></span>
<span class="m tm" style="left:1603px;top:1528.8px"><i style="color:#cccccc">init: starting sh</i></span>
<span class="m tm" style="left:1603px;top:1569.8px"><i style="color:#cccccc">$ sleep 1</i></span>
<div class="bx" style="left:1571.400px;top:1129px;width:20px;height:20px;border-radius:50%;border:3.200px solid #6a6a6a"></div>
<div class="bx" style="left:1603px;top:1610.500px;width:18px;height:40px;border:1.600px solid #d0d0d0"></div>
<div class="bx" style="left:2846px;top:1077.5px;width:1px;height:575px;background:#07080b;"></div>
<div class="bx" style="left:2846px;top:1077.5px;width:32px;height:1px;background:#07080b;"></div>
<div class="bx" style="left:2847px;top:1078.5px;width:11px;height:7.5px;background:#1c82ad;"></div>
<div class="bx" style="left:2847px;top:1411.2px;width:11px;height:15px;background:#1c82ad;"></div>
<div class="bx" style="left:2847px;top:1482px;width:11px;height:15px;background:#1c82ad;"></div>
<div class="bx" style="left:2847px;top:1559px;width:11px;height:15px;background:#5a5a5a;"></div>
<svg class="bx" style="left:1469px;top:1660px" width="24" height="34" viewBox="0 0 24 34" ><path d="M2 13.500l9.500 9L2 31.500M22.500 2.500L14 11.500l8.500 9" fill="none" stroke="#ffffff" stroke-width="1.900"/></svg>
<span class="u" style="left:1506px;top:1659.3px;font-size:27.59px;line-height:39px;color:#ffffff;transform:scaleX(1.0074);">WSL: Ubuntu-24.04</span>
<svg class="bx" style="left:1796px;top:1659px" width="30" height="38" viewBox="0 0 30 38" ><g fill="none" stroke="#cccccc" stroke-width="2.200"><circle cx="7.700" cy="6" r="3.900"/><circle cx="7.700" cy="30.600" r="3.900"/><circle cx="22.800" cy="13" r="3.900"/><path d="M7.700 10v16.500M22.800 17c0 6-4 7.500-9 8-3 .3-5 .8-6 2.500"/></g></svg>
<span class="u" style="left:1836.5px;top:1659.3px;font-size:27.59px;line-height:39px;color:#cccccc;transform:scaleX(1.0281);">main*</span>
<svg class="bx" style="left:1920px;top:1660px" width="42" height="34" viewBox="0 0 42 34" ><g fill="none" stroke="#cccccc" stroke-width="2.300"><path d="M10.850 10.850A11.900 11.900 0 0 1 32.900 18.500"/><path d="M27.800 14.800l5.100 4.800 5.400-4.200"/><path d="M9.150 15A11.900 11.900 0 0 0 31.800 22.700"/><path d="M4.300 18.800l4.850-4.800 5.950 4.800"/></g></svg>
<svg class="bx" style="left:1997px;top:1661px" width="32" height="32" viewBox="0 0 32 32" ><g fill="none" stroke="#cccccc" stroke-width="2.200"><circle cx="16" cy="16" r="14"/><path d="M10.200 10.200l11.600 11.600M21.800 10.200L10.200 21.800"/></g></svg>
<span class="u" style="left:2039.5px;top:1659.3px;font-size:27.59px;line-height:39px;color:#cccccc;transform:scaleX(0.9124);">25</span>
<svg class="bx" style="left:2078px;top:1661px" width="32" height="30" viewBox="0 0 32 30" ><path d="M16 2.500L30 28H2z" fill="none" stroke="#cccccc" stroke-width="2.200" stroke-linejoin="round"/><path d="M16 11v9.500" stroke="#cccccc" stroke-width="2.600"/><circle cx="16" cy="23.800" r="1.600" fill="#cccccc"/></svg>
<span class="u" style="left:2119.7px;top:1659.3px;font-size:27.59px;line-height:39px;color:#cccccc;transform:scaleX(0.8798);">0</span>
<svg class="bx" style="left:2175px;top:1662px" width="32" height="32" viewBox="0 0 32 32" ><g fill="none" stroke="#cccccc" stroke-width="2.100" stroke-linecap="round"><path d="M16 12.500L9.500 30M16 12.500L22.500 30M11.500 24.500h9"/><circle cx="16" cy="10.500" r="2"/><path d="M10.500 16.500a7.800 7.800 0 0 1 0-12M21.500 16.500a7.800 7.800 0 0 0 0-12M6.500 20a13 13 0 0 1 0-19M25.500 20a13 13 0 0 0 0-19"/></g></svg>
<span class="u" style="left:2215px;top:1659.3px;font-size:27.59px;line-height:39px;color:#cccccc;transform:scaleX(0.8798);">1</span>
<span class="u" style="left:2268.7px;top:1659.3px;font-size:27.59px;line-height:39px;color:#cccccc;transform:scaleX(1.0292);">clangd: idle</span>
<span class="u" style="left:2503.3px;top:1659.3px;font-size:27.59px;line-height:39px;color:#cccccc;transform:scaleX(0.9393);">UTF-8</span>
<span class="u" style="left:2618px;top:1659.3px;font-size:27.59px;line-height:39px;color:#cccccc;transform:scaleX(0.7860);">LF</span>
<span class="u" style="left:2682.5px;top:1659.3px;font-size:27.59px;line-height:39px;color:#cccccc;transform:scaleX(0.8282);">C</span>
<svg class="bx" style="left:2738px;top:1661.7px" width="35" height="30.3" viewBox="0 0 39.1 33.9" ><path d="M4.30,6.50 C4.30,2.00 7.20,0.00 11.70,0.00 C14.70,0.00 17.30,0.70 19.55,2.20 C21.80,0.70 24.40,0.00 27.40,0.00 C31.90,0.00 34.80,2.00 34.80,6.50 L35.00,14.30 C37.70,16.00 39.10,18.00 39.10,20.50 L39.10,24.00 C39.10,29.00 28.70,33.90 19.55,33.90 C10.40,33.90 0.00,29.00 0.00,24.00 L0.00,20.50 C0.00,18.00 1.40,16.00 4.10,14.30 Z" fill="#d0d0d0"/><path d="M7.70,7.00 C7.70,5.00 9.20,4.20 12.20,4.20 C15.70,4.20 17.40,5.20 17.40,7.50 C17.40,11.00 15.90,13.10 12.90,13.10 L10.10,13.10 C8.40,13.10 7.70,12.00 7.70,10.30 Z" fill="#181818"/><path d="M31.40,7.00 C31.40,5.00 29.90,4.20 26.90,4.20 C23.40,4.20 21.70,5.20 21.70,7.50 C21.70,11.00 23.20,13.10 26.20,13.10 L29.00,13.10 C30.70,13.10 31.40,12.00 31.40,10.30 Z" fill="#181818"/><path d="M7.70,17.20 C12.20,17.80 16.90,17.00 19.55,14.30 C22.20,17.00 26.90,17.80 31.40,17.20 L31.40,26.30 C27.70,28.40 23.70,29.40 19.55,29.40 C15.40,29.40 11.40,28.40 7.70,26.30 Z" fill="#181818"/><rect x="13.20" y="19.00" width="4.2" height="7.8" rx="2.1" fill="#d0d0d0"/><rect x="21.70" y="19.00" width="4.2" height="7.8" rx="2.1" fill="#d0d0d0"/></svg>
<svg class="bx" style="left:2812px;top:1660px" width="32" height="34" viewBox="0 0 32 34" ><g fill="none" stroke="#cccccc" stroke-width="2.200" stroke-linejoin="round"><path d="M17.500 3C11 3 7.300 7.500 7.300 13v5.500L4.500 26.300h23.500L25.300 17"/></g><path d="M11 27.500h9c-.3 2.800-2 4.500-4.500 4.500S11.300 30.300 11 27.500z" fill="#cccccc"/><circle cx="24" cy="8.300" r="6.800" fill="#cccccc"/></svg>
<svg class="bx" style="left:0;top:0" width="2879" height="1697" viewBox="0 0 2879 1697"><g fill="none" stroke="#868686" stroke-linejoin="round" stroke-width="3.700"><path d="M1487.800 151V116.600l2.800-2.800h19.200l10.300 10.300V151l-2.900 2.900h-26.500z"/><path d="M1509.200 114.500v10.300h10.500"/><path d="M1486 128.300h-10.300l-2.800 2.800v34.200l2.900 2.900h27.200l2.800-2.900V156"/></g><g fill="none" stroke="#868686" stroke-linejoin="round" stroke-width="3.700"><circle cx="1505.500" cy="247.100" r="18.300"/><path d="M1492.800 260.500L1472.500 283.500" /></g><g fill="none" stroke="#868686" stroke-linejoin="round" stroke-width="3.500"><circle cx="1485.300" cy="350.900" r="7.300"/><circle cx="1485.300" cy="390.800" r="7.300"/><circle cx="1510.900" cy="361.700" r="7.300"/><path d="M1485.300 358.500v25M1510.900 369.500c-1 5.500-5 7.500-12 8-7 .5-12.500 1.500-13.600 6"/></g><circle cx="1516.800" cy="390.800" r="18.900" fill="#0078d4"/><g fill="none" stroke="#868686" stroke-linejoin="round" stroke-width="3.600" stroke-linejoin="miter"><path d="M1488.800 483V459.200L1524.800 481.300 1501.600 496.300"/></g><g fill="none" stroke="#868686" stroke-linejoin="round" stroke-width="3.500"><ellipse cx="1483.500" cy="500.400" rx="9.100" ry="12.700"/><path d="M1474.700 496.800h17.600M1475.200 494.700l-5.100-4M1491.800 494.700l5.100-4M1472.800 502.300h-4.200M1494.200 502.300h4.200M1475.200 509l-5.200 4.800M1491.800 509l5.200 4.800"/></g><g fill="none" stroke="#868686" stroke-linejoin="round" stroke-width="3.600"><path d="M1492.500 586.500h-19.500a2 2 0 0 0-2 2v38a2 2 0 0 0 2 2h39.500a2 2 0 0 0 2-2V609.500a2 2 0 0 0-2-2h-20zM1492.500 586.500V628.500M1471 607.500h21.500"/><rect x="1503.800" y="575.200" width="21.200" height="21.200" rx="2.500"/></g><g fill="none" stroke="#868686" stroke-linejoin="round" stroke-width="3.600"><path d="M1496 733.500h-21.500a2.500 2.500 0 0 1-2.500-2.500V697.500a2.500 2.500 0 0 1 2.500-2.500h44.500a2.500 2.500 0 0 1 2.500 2.500v18"/><path d="M1482 740.200h13"/><circle cx="1511.700" cy="730.800" r="13.800"/><path d="M1505.800 726.500l4 4-4 4M1517.800 722.500l-4 4 4 4" stroke-width="2.200"/></g><g fill="none" stroke="#868686" stroke-linejoin="round" stroke-width="3.600"><circle cx="1498" cy="1478" r="27.500"/><circle cx="1498" cy="1470.500" r="11"/><path d="M1480.500 1498.500c2-9 9-14 17.500-14s15.500 5 17.500 14"/></g><g fill="none" stroke="#868686" stroke-linejoin="miter" stroke-width="4"><path d="M1492.3 1576.4 L1493.9 1566.0 L1501.9 1566.0 L1503.5 1576.4 L1505.6 1577.3 L1514.1 1571.0 L1519.8 1576.7 L1513.5 1585.2 L1514.4 1587.3 L1524.8 1588.9 L1524.8 1596.9 L1514.4 1598.5 L1513.5 1600.6 L1519.8 1609.1 L1514.1 1614.8 L1505.6 1608.5 L1503.5 1609.4 L1501.9 1619.8 L1493.9 1619.8 L1492.3 1609.4 L1490.2 1608.5 L1481.7 1614.8 L1476.0 1609.1 L1482.3 1600.6 L1481.4 1598.5 L1471.0 1596.9 L1471.0 1588.9 L1481.4 1587.3 L1482.3 1585.2 L1476.0 1576.7 L1481.7 1571.0 L1490.2 1577.3z"/><circle cx="1497.9" cy="1592.9" r="6.400"/></g></svg>
<span class="u" style="left:1510.5px;top:375.5px;font-size:21.55px;line-height:30px;color:#ffffff;">1</span>
<div class="bx" style="left:1442px;top:2px;width:54px;height:1695px;background:linear-gradient(90deg,rgba(0,0,0,.36),rgba(0,0,0,.24) 18%,rgba(0,0,0,.11) 48%,rgba(0,0,0,0))"></div>
</body></html>
